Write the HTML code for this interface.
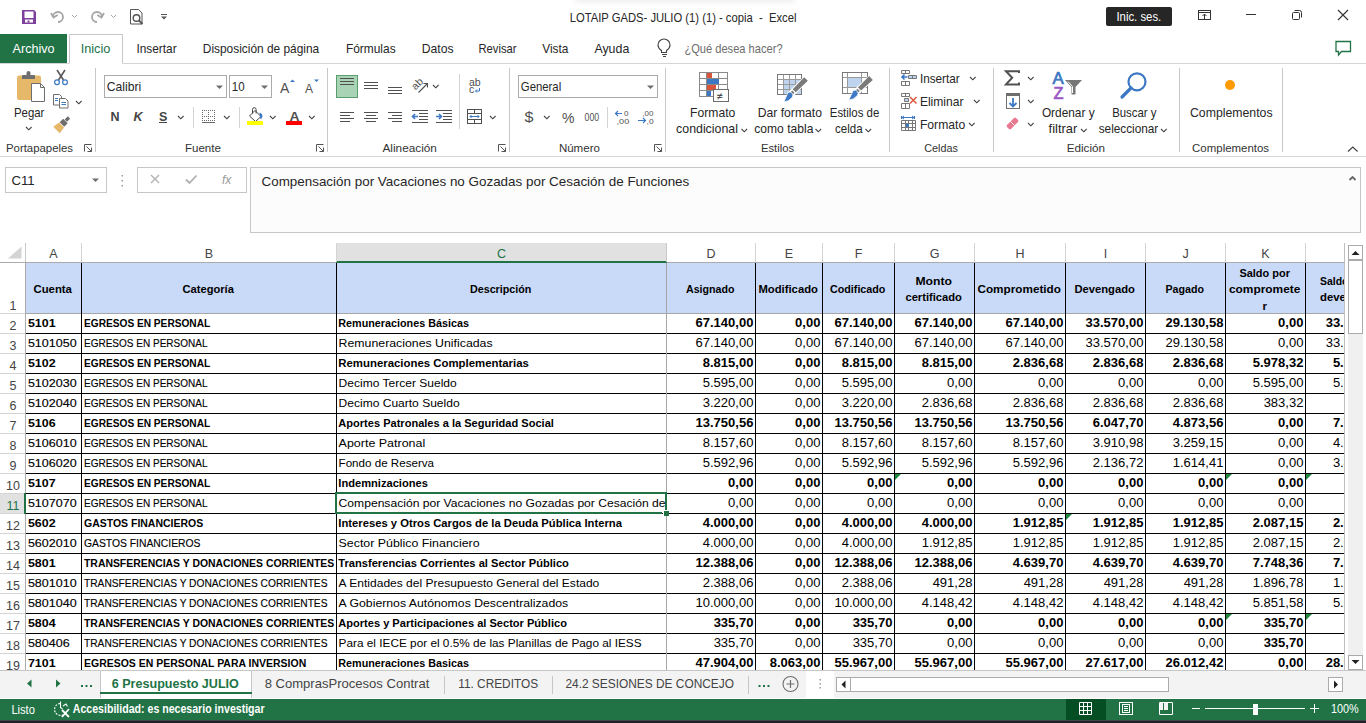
<!DOCTYPE html>
<html><head><meta charset="utf-8"><title>Excel</title>
<style>html,body{margin:0;padding:0;background:#fff;overflow:hidden;width:1366px;height:723px}svg{display:block}text{font-family:"Liberation Sans",sans-serif}</style>
</head><body><svg width="1366" height="723" viewBox="0 0 1366 723" font-family='"Liberation Sans", sans-serif'><rect x="0" y="0" width="1366" height="723" fill="#ffffff" /><filter id="blur4" x="-20%" y="-200%" width="140%" height="500%"><feGaussianBlur stdDeviation="3"/></filter><rect x="575" y="-6" width="220" height="8" fill="#000" opacity="0.07" filter="url(#blur4)"/><path d="M22 10 h12 l2 2 v12 h-14 z" fill="#7E3F9D"/><rect x="24.5" y="11.5" width="9" height="6.5" fill="#ffffff" /><rect x="25" y="19.5" width="8" height="3" fill="#ffffff" /><rect x="27.5" y="20.5" width="2" height="2" fill="#7E3F9D" /><path d="M53 17 a5 5 0 1 1 5 5" fill="none" stroke="#A6A6A6" stroke-width="1.8"/><path d="M51 13 l2.5 4.5 l4.2 -2.6" fill="none" stroke="#A6A6A6" stroke-width="1.8"/><path d="M72 15 l2.5 2.5 l2.5 -2.5" fill="none" stroke="#A6A6A6" stroke-width="1"/><path d="M102 17 a5 5 0 1 0 -5 5" fill="none" stroke="#A6A6A6" stroke-width="1.8"/><path d="M104 13 l-2.5 4.5 l-4.2 -2.6" fill="none" stroke="#A6A6A6" stroke-width="1.8"/><path d="M111 15 l2.5 2.5 l2.5 -2.5" fill="none" stroke="#A6A6A6" stroke-width="1"/><path d="M130.5 9.5 h8 l3.5 3.5 v11 h-11.5 z" fill="none" stroke="#555" stroke-width="1"/><circle cx="136.5" cy="18" r="3.3" fill="none" stroke="#555" stroke-width="1.4"/><path d="M139 20.5 l3.5 3.5" stroke="#555" stroke-width="1.8"/><rect x="161" y="14" width="6" height="1" fill="#555"/><path d="M161 16.5 h6 l-3 3 z" fill="#555"/><text x="569.7" y="22" font-size="12.4" fill="#262626" textLength="226.7" lengthAdjust="spacingAndGlyphs">LOTAIP GADS- JULIO (1) (1) - copia &#160;- &#160;Excel</text><rect x="1106" y="7" width="66" height="19" rx="2" fill="#262626"/><text x="1116.4" y="21" font-size="12.4" fill="#ffffff" textLength="44.9" lengthAdjust="spacingAndGlyphs">Inic. ses.</text><rect x="1198.5" y="10.5" width="12" height="9" fill="none" stroke="#333" stroke-width="1"/><path d="M1198.5 12.5 h12" stroke="#333" stroke-width="1"/><path d="M1204.5 19 v-5 M1202.5 16 l2 -2 l2 2" fill="none" stroke="#333" stroke-width="1"/><rect x="1246" y="14" width="10" height="1" fill="#333" /><rect x="1292.5" y="12.5" width="7" height="7" rx="1" fill="none" stroke="#333" stroke-width="1"/><path d="M1294.5 10.5 h5 a2 2 0 0 1 2 2 v5" fill="none" stroke="#333" stroke-width="1"/><path d="M1338 10 l10 10 M1348 10 l-10 10" stroke="#333" stroke-width="1.1"/><rect x="0" y="34" width="67" height="29" fill="#217346" /><text x="12.6" y="53" font-size="12.4" fill="#ffffff" textLength="41.9" lengthAdjust="spacingAndGlyphs">Archivo</text><path d="M69.5 63.5 V34.5 H122.5 V63.5" fill="#ffffff" stroke="#C6C6C6" stroke-width="1"/><text x="80.7" y="53" font-size="12.4" fill="#217346" textLength="29.7" lengthAdjust="spacingAndGlyphs">Inicio</text><rect x="0" y="63" width="69" height="1" fill="#D4D4D4" /><rect x="123" y="63" width="1243" height="1" fill="#D4D4D4" /><text x="136.4" y="53" font-size="12.4" fill="#262626" textLength="40.2" lengthAdjust="spacingAndGlyphs">Insertar</text><text x="202.8" y="53" font-size="12.4" fill="#262626" textLength="116.4" lengthAdjust="spacingAndGlyphs">Disposición de página</text><text x="345.9" y="53" font-size="12.4" fill="#262626" textLength="49.7" lengthAdjust="spacingAndGlyphs">Fórmulas</text><text x="421.8" y="53" font-size="12.4" fill="#262626" textLength="31.8" lengthAdjust="spacingAndGlyphs">Datos</text><text x="478.4" y="53" font-size="12.4" fill="#262626" textLength="38.1" lengthAdjust="spacingAndGlyphs">Revisar</text><text x="542.2" y="53" font-size="12.4" fill="#262626" textLength="26.2" lengthAdjust="spacingAndGlyphs">Vista</text><text x="594.4" y="53" font-size="12.4" fill="#262626" textLength="34.9" lengthAdjust="spacingAndGlyphs">Ayuda</text><path d="M661.5 50.5 c-3 -2 -3.5 -4 -3.5 -5.5 a6 6 0 0 1 12 0 c0 1.5 -0.5 3.5 -3.5 5.5 v2 h-5 z" fill="none" stroke="#444" stroke-width="1.1"/><rect x="662" y="54" width="5" height="1" fill="#444" /><rect x="663" y="56" width="3" height="1" fill="#444" /><text x="684.4" y="53" font-size="12.4" fill="#6D6D6D" textLength="98.2" lengthAdjust="spacingAndGlyphs">¿Qué desea hacer?</text><path d="M1336 41.5 h14.5 v10 h-9 l-3 3.5 v-3.5 h-2.5 z" fill="none" stroke="#217346" stroke-width="1.3"/><rect x="0" y="156" width="1366" height="1" fill="#D6D6D6" /><rect x="95" y="68" width="1" height="84" fill="#C8C8C8" /><rect x="327" y="68" width="1" height="84" fill="#C8C8C8" /><rect x="509" y="68" width="1" height="84" fill="#C8C8C8" /><rect x="665" y="68" width="1" height="84" fill="#C8C8C8" /><rect x="889" y="68" width="1" height="84" fill="#C8C8C8" /><rect x="993" y="68" width="1" height="84" fill="#C8C8C8" /><rect x="1179" y="68" width="1" height="84" fill="#C8C8C8" /><rect x="1282" y="68" width="1" height="84" fill="#C8C8C8" /><text x="6.0" y="152" font-size="11.6" fill="#333333" textLength="67.0" lengthAdjust="spacingAndGlyphs">Portapapeles</text><text x="184.9" y="152" font-size="11.6" fill="#333333" textLength="36.0" lengthAdjust="spacingAndGlyphs">Fuente</text><text x="382.5" y="152" font-size="11.6" fill="#333333" textLength="54.4" lengthAdjust="spacingAndGlyphs">Alineación</text><text x="558.9" y="152" font-size="11.6" fill="#333333" textLength="41.0" lengthAdjust="spacingAndGlyphs">Número</text><text x="760.9" y="152" font-size="11.6" fill="#333333" textLength="33.2" lengthAdjust="spacingAndGlyphs">Estilos</text><text x="924.3" y="152" font-size="11.6" fill="#333333" textLength="33.6" lengthAdjust="spacingAndGlyphs">Celdas</text><text x="1066.7" y="152" font-size="11.6" fill="#333333" textLength="38.3" lengthAdjust="spacingAndGlyphs">Edición</text><text x="1192.1" y="152" font-size="11.6" fill="#333333" textLength="77.0" lengthAdjust="spacingAndGlyphs">Complementos</text><path d="M84.5 151.5 v-7 h7" fill="none" stroke="#555" stroke-width="1"/><path d="M86.5 146.5 l5 5 M91.5 147.5 v4 h-4" fill="none" stroke="#555" stroke-width="1"/><path d="M316.5 151.5 v-7 h7" fill="none" stroke="#555" stroke-width="1"/><path d="M318.5 146.5 l5 5 M323.5 147.5 v4 h-4" fill="none" stroke="#555" stroke-width="1"/><path d="M498.5 151.5 v-7 h7" fill="none" stroke="#555" stroke-width="1"/><path d="M500.5 146.5 l5 5 M505.5 147.5 v4 h-4" fill="none" stroke="#555" stroke-width="1"/><path d="M654.5 151.5 v-7 h7" fill="none" stroke="#555" stroke-width="1"/><path d="M656.5 146.5 l5 5 M661.5 147.5 v4 h-4" fill="none" stroke="#555" stroke-width="1"/><rect x="17" y="75.5" width="24" height="24.5" rx="2" fill="#E6B96A"/><path d="M22 79 v-3 a1 1 0 0 1 1 -1 h3.5 v-2 a2 2 0 0 1 4 0 v2 h3.5 a1 1 0 0 1 1 1 v3 z" fill="#6E6E6E"/><path d="M31.5 83.5 h9 l4 4 v14 h-13 z" fill="#ffffff" stroke="#6E6E6E" stroke-width="1"/><path d="M40.5 83.5 v4 h4" fill="none" stroke="#6E6E6E" stroke-width="1"/><text x="14.0" y="117" font-size="12.4" fill="#262626" textLength="30.4" lengthAdjust="spacingAndGlyphs">Pegar</text><path d="M26 127 l2.8 2.8 l2.8 -2.8" fill="none" stroke="#444" stroke-width="1.1"/><path d="M57 70 L63.5 80 M65 70 L58.5 80" stroke="#5A5A5A" stroke-width="1.6"/><circle cx="57" cy="82.2" r="2.4" fill="none" stroke="#3C78C3" stroke-width="1.2"/><circle cx="65" cy="82.2" r="2.4" fill="none" stroke="#3C78C3" stroke-width="1.2"/><path d="M53.5 94.5 h6 l2 2 v8.5 h-8 z" fill="#fff" stroke="#6E6E6E" stroke-width="1"/><path d="M59.5 98.5 h6 l2.5 2.5 v7 h-8.5 z" fill="#fff" stroke="#6E6E6E" stroke-width="1"/><path d="M55 98.5 h3 M55 100.5 h3 M61.5 102.5 h4.5 M61.5 104.5 h4.5" stroke="#3C78C3" stroke-width="1"/><path d="M76 101 l2.8 2.8 l2.8 -2.8" fill="none" stroke="#444" stroke-width="1.1"/><path d="M70.13 118.63 L66.95 121.81 L64.69 119.55 L67.87 116.37 z" fill="#6E6E6E"/><path d="M67.73 123.30 L64.19 126.83 L59.67 122.31 L63.20 118.77 z" fill="#6E6E6E"/><path d="M64.05 127.54 L59.75 133.25 L53.25 126.75 L58.96 122.45 z" fill="#E6B96A"/><rect x="104.5" y="75.5" width="122" height="22" fill="#fff" stroke="#ABABAB" stroke-width="1"/><text x="106.7" y="91" font-size="12.4" fill="#262626" textLength="34.6" lengthAdjust="spacingAndGlyphs">Calibri</text><path d="M216 85.5 h7 l-3.5 3.5 z" fill="#6E6E6E"/><rect x="229.5" y="75.5" width="42" height="22" fill="#fff" stroke="#ABABAB" stroke-width="1"/><text x="231.8" y="91" font-size="12.4" fill="#262626" textLength="12.8" lengthAdjust="spacingAndGlyphs">10</text><path d="M261 85.5 h7 l-3.5 3.5 z" fill="#6E6E6E"/><text x="280" y="93" font-size="14" fill="#505050">A</text><path d="M290 82 l2.5 -2.5 l2.5 2.5 z" fill="#3C78C3"/><text x="305" y="93" font-size="12" fill="#505050">A</text><path d="M314 79.5 h5 l-2.5 2.5 z" fill="#3C78C3"/><text x="110.5" y="121" font-size="12.5" font-weight="700" fill="#444">N</text><text x="133.5" y="121" font-size="12.5" font-weight="700" fill="#444" font-style="italic">K</text><text x="159" y="121" font-size="12.5" font-weight="700" fill="#444">S</text><rect x="159" y="122" width="8" height="1" fill="#444" /><path d="M178 116 l2.8 2.8 l2.8 -2.8" fill="none" stroke="#444" stroke-width="1.1"/><rect x="193" y="107" width="1" height="21" fill="#D4D4D4" /><rect x="202" y="110" width="1" height="1" fill="#6A6A6A" /><rect x="204" y="110" width="1" height="1" fill="#6A6A6A" /><rect x="206" y="110" width="1" height="1" fill="#6A6A6A" /><rect x="208" y="110" width="1" height="1" fill="#6A6A6A" /><rect x="210" y="110" width="1" height="1" fill="#6A6A6A" /><rect x="212" y="110" width="1" height="1" fill="#6A6A6A" /><rect x="214" y="110" width="1" height="1" fill="#6A6A6A" /><rect x="202" y="112" width="1" height="1" fill="#6A6A6A" /><rect x="208" y="112" width="1" height="1" fill="#6A6A6A" /><rect x="214" y="112" width="1" height="1" fill="#6A6A6A" /><rect x="202" y="114" width="1" height="1" fill="#6A6A6A" /><rect x="208" y="114" width="1" height="1" fill="#6A6A6A" /><rect x="214" y="114" width="1" height="1" fill="#6A6A6A" /><rect x="202" y="116" width="1" height="1" fill="#6A6A6A" /><rect x="204" y="116" width="1" height="1" fill="#6A6A6A" /><rect x="206" y="116" width="1" height="1" fill="#6A6A6A" /><rect x="208" y="116" width="1" height="1" fill="#6A6A6A" /><rect x="210" y="116" width="1" height="1" fill="#6A6A6A" /><rect x="212" y="116" width="1" height="1" fill="#6A6A6A" /><rect x="214" y="116" width="1" height="1" fill="#6A6A6A" /><rect x="202" y="118" width="1" height="1" fill="#6A6A6A" /><rect x="208" y="118" width="1" height="1" fill="#6A6A6A" /><rect x="214" y="118" width="1" height="1" fill="#6A6A6A" /><rect x="202" y="120" width="1" height="1" fill="#6A6A6A" /><rect x="204" y="120" width="1" height="1" fill="#6A6A6A" /><rect x="206" y="120" width="1" height="1" fill="#6A6A6A" /><rect x="208" y="120" width="1" height="1" fill="#6A6A6A" /><rect x="210" y="120" width="1" height="1" fill="#6A6A6A" /><rect x="212" y="120" width="1" height="1" fill="#6A6A6A" /><rect x="214" y="120" width="1" height="1" fill="#6A6A6A" /><rect x="202" y="122" width="13" height="1" fill="#6A6A6A" /><path d="M224 116 l2.8 2.8 l2.8 -2.8" fill="none" stroke="#444" stroke-width="1.1"/><rect x="239" y="107" width="1" height="21" fill="#D4D4D4" /><path d="M249.5 116 l5.5 -5.5 l6 6 l-5.5 5 z" fill="#fff" stroke="#444" stroke-width="1"/><path d="M252.5 113.5 v-4 a1.8 1.8 0 0 1 3.6 0 v4" fill="none" stroke="#444" stroke-width="1"/><path d="M259.5 112.5 q3.5 1 2.8 4.5 l-1.3 2.5 l-1 -2 z" fill="#3C78C3"/><rect x="247" y="121" width="16" height="4" fill="#FFFF00" /><path d="M270 116 l2.8 2.8 l2.8 -2.8" fill="none" stroke="#444" stroke-width="1.1"/><text x="289.6" y="121" font-size="13.5" font-weight="700" fill="#505050" textLength="10" lengthAdjust="spacingAndGlyphs">A</text><rect x="286" y="121" width="16" height="4" fill="#FF0000" /><path d="M309 116 l2.8 2.8 l2.8 -2.8" fill="none" stroke="#444" stroke-width="1.1"/><rect x="336.5" y="75.5" width="21" height="22" fill="#A9D3B5" stroke="#5A9E70" stroke-width="1"/><rect x="340" y="78" width="14" height="1" fill="#505050" /><rect x="340" y="81" width="14" height="1" fill="#505050" /><rect x="340" y="84" width="14" height="1" fill="#505050" /><rect x="364" y="82" width="14" height="1" fill="#505050" /><rect x="364" y="85" width="14" height="1" fill="#505050" /><rect x="364" y="88" width="14" height="1" fill="#505050" /><rect x="388" y="87" width="14" height="1" fill="#505050" /><rect x="388" y="90" width="14" height="1" fill="#505050" /><rect x="388" y="93" width="14" height="1" fill="#505050" /><text x="0" y="0" font-size="10.5" fill="#505050" transform="translate(415.5 90.5) rotate(-45)">ab</text><path d="M418.5 92.5 L427.5 83.5 M423.5 83.5 h4 v4" fill="none" stroke="#505050" stroke-width="1.1"/><path d="M433 85 l2.8 2.8 l2.8 -2.8" fill="none" stroke="#444" stroke-width="1.1"/><rect x="459" y="74" width="1" height="55" fill="#D4D4D4" /><text x="469" y="86" font-size="10.5" fill="#505050">ab</text><text x="469" y="92.6" font-size="10.5" fill="#505050">c</text><path d="M479.5 88 v3 h-4 M477 89.5 l-1.5 1.5 l1.5 1.5" fill="none" stroke="#3C78C3" stroke-width="1"/><rect x="340" y="112" width="14" height="1" fill="#505050" /><rect x="340" y="115" width="10" height="1" fill="#505050" /><rect x="340" y="118" width="14" height="1" fill="#505050" /><rect x="340" y="121" width="10" height="1" fill="#505050" /><rect x="364" y="112" width="14" height="1" fill="#505050" /><rect x="366" y="115" width="10" height="1" fill="#505050" /><rect x="364" y="118" width="14" height="1" fill="#505050" /><rect x="366" y="121" width="10" height="1" fill="#505050" /><rect x="388" y="112" width="14" height="1" fill="#505050" /><rect x="392" y="115" width="10" height="1" fill="#505050" /><rect x="388" y="118" width="14" height="1" fill="#505050" /><rect x="392" y="121" width="10" height="1" fill="#505050" /><rect x="412" y="110" width="16" height="1" fill="#505050" /><rect x="419" y="113" width="9" height="1" fill="#505050" /><rect x="419" y="116" width="9" height="1" fill="#505050" /><rect x="419" y="119" width="9" height="1" fill="#505050" /><rect x="412" y="122" width="16" height="1" fill="#505050" /><path d="M418 116.5 h-5 M415 114 l-2.5 2.5 l2.5 2.5" fill="none" stroke="#3C78C3" stroke-width="1.6"/><rect x="436" y="110" width="16" height="1" fill="#505050" /><rect x="443" y="113" width="9" height="1" fill="#505050" /><rect x="443" y="116" width="9" height="1" fill="#505050" /><rect x="443" y="119" width="9" height="1" fill="#505050" /><rect x="436" y="122" width="16" height="1" fill="#505050" /><path d="M436 116.5 h5 M439 114 l2.5 2.5 l-2.5 2.5" fill="none" stroke="#3C78C3" stroke-width="1.6"/><rect x="467.5" y="109.5" width="14" height="14" fill="none" stroke="#505050" stroke-width="1"/><path d="M467.5 113.5 h14 M467.5 119.5 h14 M474.5 109.5 v4 M474.5 119.5 v4" stroke="#505050" stroke-width="1"/><path d="M470 116.5 h9 M471.5 115 l-1.5 1.5 l1.5 1.5 M477.5 115 l1.5 1.5 l-1.5 1.5" fill="none" stroke="#3C78C3" stroke-width="1"/><path d="M490 116 l2.8 2.8 l2.8 -2.8" fill="none" stroke="#444" stroke-width="1.1"/><rect x="518.5" y="75.5" width="139" height="22" fill="#fff" stroke="#ABABAB" stroke-width="1"/><text x="520.8" y="91" font-size="12.4" fill="#262626" textLength="40.4" lengthAdjust="spacingAndGlyphs">General</text><path d="M647 85.5 h7 l-3.5 3.5 z" fill="#6E6E6E"/><text x="524.6" y="122.4" font-size="15.5" fill="#505050" textLength="9" lengthAdjust="spacingAndGlyphs">$</text><path d="M544 116 l2.8 2.8 l2.8 -2.8" fill="none" stroke="#444" stroke-width="1.1"/><text x="562" y="123" font-size="14" fill="#505050">%</text><text x="584.6" y="120.8" font-size="10.5" fill="#505050" textLength="14.6" lengthAdjust="spacingAndGlyphs">000</text><rect x="607" y="107" width="1" height="21" fill="#D4D4D4" /><text x="624" y="115.6" font-size="8" fill="#505050">0</text><text x="616.6" y="123.6" font-size="8" fill="#505050" textLength="12.6" lengthAdjust="spacingAndGlyphs">,00</text><path d="M622 113.5 h-6.5 M618 111 l-2.5 2.5 l2.5 2.5" fill="none" stroke="#3C78C3" stroke-width="1.2"/><text x="642.4" y="115.6" font-size="8" fill="#505050" textLength="11" lengthAdjust="spacingAndGlyphs">,00</text><text x="646.6" y="123.6" font-size="8" fill="#505050" textLength="7" lengthAdjust="spacingAndGlyphs">,0</text><path d="M638 120.5 h7.5 M643 118 l2.5 2.5 l-2.5 2.5" fill="none" stroke="#3C78C3" stroke-width="1.2"/><rect x="699.5" y="72.5" width="28" height="24" fill="#fff" stroke="#8A8A8A" stroke-width="1"/><path d="M706.5 72.5 v24 M718.5 72.5 v24 M699.5 78.5 h28 M699.5 84.5 h28 M699.5 90.5 h28" stroke="#8A8A8A" stroke-width="1"/><rect x="707" y="73" width="5" height="5" fill="#D9553B" /><rect x="707" y="79" width="12" height="5" fill="#3C78C3" /><rect x="707" y="85" width="9" height="5" fill="#D9553B" /><rect x="707" y="91" width="4" height="5" fill="#3C78C3" /><rect x="713.5" y="89.5" width="15" height="12" fill="#fff" stroke="#6E6E6E" stroke-width="1"/><text x="716.5" y="99.5" font-size="11" fill="#333">≠</text><text x="690.1" y="117" font-size="12.4" fill="#262626" textLength="45.2" lengthAdjust="spacingAndGlyphs">Formato</text><text x="676.1" y="133" font-size="12.4" fill="#262626" textLength="61.8" lengthAdjust="spacingAndGlyphs">condicional</text><path d="M741.5 129 l2.8 2.8 l2.8 -2.8" fill="none" stroke="#444" stroke-width="1.1"/><rect x="777.5" y="74.5" width="24" height="20" fill="#fff" stroke="#7A7A7A" stroke-width="1"/><rect x="784" y="80" width="17" height="14" fill="#BDD3EE" /><path d="M783.5 74.5 v20 M789.5 74.5 v20 M795.5 74.5 v20 M777.5 79.5 h24 M777.5 84.5 h24 M777.5 89.5 h24" stroke="#9A9A9A" stroke-width="1"/><path d="M777.5 74.5 h24 v20 h-24 z" fill="none" stroke="#7A7A7A" stroke-width="1"/><path d="M789.86 95.14 L806.00 79.00" stroke="#fff" stroke-width="6.5" stroke-linecap="butt"/><path d="M789.79 92.94 L792.27 90.47 L794.53 92.73 L792.06 95.21 z" fill="#7A7A7A"/><path d="M792.69 89.20 L804.16 77.16 L807.84 80.84 L795.80 92.31 z" fill="#7A7A7A"/><path d="M783.85 101.85 L787.95 92.52 A3.3 3.3 0 0 1 792.48 97.05 Q788.45 102.21 783.85 101.85 z" fill="#3C78C3" stroke="#fff" stroke-width="0.8"/><text x="757.8" y="117" font-size="12.4" fill="#262626" textLength="64.1" lengthAdjust="spacingAndGlyphs">Dar formato</text><text x="754.3" y="133" font-size="12.4" fill="#262626" textLength="59.1" lengthAdjust="spacingAndGlyphs">como tabla</text><path d="M815.5 129 l2.8 2.8 l2.8 -2.8" fill="none" stroke="#444" stroke-width="1.1"/><rect x="842.5" y="72.5" width="25" height="21" fill="#fff" stroke="#7A7A7A" stroke-width="1"/><rect x="848" y="78" width="13" height="9" fill="#BDD3EE" /><path d="M847.5 72.5 v21 M861.5 72.5 v21 M842.5 77.5 h25 M842.5 87.5 h25" stroke="#9A9A9A" stroke-width="1"/><path d="M842.5 72.5 h25 v21 h-25 z" fill="none" stroke="#7A7A7A" stroke-width="1"/><path d="M855.01 93.28 L871.00 78.00" stroke="#fff" stroke-width="6.5" stroke-linecap="butt"/><path d="M854.99 91.09 L857.52 88.67 L859.73 90.98 L857.20 93.40 z" fill="#7A7A7A"/><path d="M857.97 87.41 L869.20 76.12 L872.80 79.88 L861.01 90.59 z" fill="#7A7A7A"/><path d="M848.85 99.86 L853.16 90.62 A3.3 3.3 0 0 1 857.58 95.25 Q853.43 100.32 848.85 99.86 z" fill="#3C78C3" stroke="#fff" stroke-width="0.8"/><text x="829.8" y="117" font-size="12.4" fill="#262626" textLength="49.5" lengthAdjust="spacingAndGlyphs">Estilos de</text><text x="835.1" y="133" font-size="12.4" fill="#262626" textLength="27.5" lengthAdjust="spacingAndGlyphs">celda</text><path d="M865.5 129 l2.8 2.8 l2.8 -2.8" fill="none" stroke="#444" stroke-width="1.1"/><path d="M901.5 70.5 v3 M905.5 70.5 v3 M909.5 70.5 v3 M901.5 70.5 h8 M901.5 73.5 h8 " fill="none" stroke="#767676" stroke-width="1"/><path d="M901.5 81.5 v4 M905.5 81.5 v4 M909.5 81.5 v4 M901.5 81.5 h8 M901.5 85.5 h8 " fill="none" stroke="#767676" stroke-width="1"/><path d="M905.5 73.5 v0 M901.5 81.5 v4" stroke="#767676" stroke-width="1"/><rect x="909" y="76" width="7" height="2" fill="#BDD3EE" /><path d="M908.5 75.5 v3 M912.5 75.5 v3 M916.5 75.5 v3 M908.5 75.5 h8 M908.5 78.5 h8 " fill="none" stroke="#767676" stroke-width="1"/><path d="M907.5 77 h-5 M904.5 74.5 l-2.5 2.5 l2.5 2.5" fill="none" stroke="#3C78C3" stroke-width="1.6"/><text x="919.9" y="83" font-size="12.4" fill="#262626" textLength="39.7" lengthAdjust="spacingAndGlyphs">Insertar</text><path d="M970 77 l2.8 2.8 l2.8 -2.8" fill="none" stroke="#444" stroke-width="1.1"/><path d="M901.5 93.5 v3 M905.5 93.5 v3 M909.5 93.5 v3 M901.5 93.5 h8 M901.5 96.5 h8 " fill="none" stroke="#767676" stroke-width="1"/><path d="M901.5 103.5 v5 M905.5 103.5 v5 M909.5 103.5 v5 M901.5 103.5 h8 M901.5 108.5 h8 " fill="none" stroke="#767676" stroke-width="1"/><rect x="905" y="99" width="3" height="2" fill="#BDD3EE" /><path d="M904.5 98.5 v3 M908.5 98.5 v3 M904.5 98.5 h4 M904.5 101.5 h4 " fill="none" stroke="#767676" stroke-width="1"/><path d="M910 97 l6.5 6.5 M916.5 97 l-6.5 6.5" stroke="#E0583D" stroke-width="1.5"/><text x="919.9" y="106" font-size="12.4" fill="#262626" textLength="43.6" lengthAdjust="spacingAndGlyphs">Eliminar</text><path d="M974 100 l2.8 2.8 l2.8 -2.8" fill="none" stroke="#444" stroke-width="1.1"/><path d="M901.5 120.5 h14 v10 h-14 z M905.5 120.5 v10 M908.5 120.5 v10 M912.5 120.5 v10 M901.5 123.5 h14 M901.5 127.5 h14" fill="none" stroke="#767676" stroke-width="1"/><rect x="906" y="124" width="3" height="3" fill="#3C78C3" /><path d="M902 117.5 h12 M901.5 116 v3 M914.5 116 v3 M904 116 l-2 1.5 l2 1.5 M912 116 l2 1.5 l-2 1.5" fill="none" stroke="#3C78C3" stroke-width="1"/><text x="919.9" y="129" font-size="12.4" fill="#262626" textLength="45.3" lengthAdjust="spacingAndGlyphs">Formato</text><path d="M969 123 l2.8 2.8 l2.8 -2.8" fill="none" stroke="#444" stroke-width="1.1"/><path d="M1019 73 v-1.8 h-13 l6.2 6.6 l-6.2 6.6 h13 v-1.8" fill="none" stroke="#505050" stroke-width="2" stroke-linejoin="miter"/><path d="M1028 77 l2.8 2.8 l2.8 -2.8" fill="none" stroke="#444" stroke-width="1.1"/><rect x="1006.5" y="93.5" width="13" height="15" fill="#fff" stroke="#6E6E6E" stroke-width="1"/><rect x="1006" y="93" width="14" height="3" fill="#6E6E6E" /><path d="M1013 98 v8 M1009.5 103 l3.5 3.5 l3.5 -3.5" fill="none" stroke="#3C78C3" stroke-width="1.8"/><path d="M1028 100 l2.8 2.8 l2.8 -2.8" fill="none" stroke="#444" stroke-width="1.1"/><path d="M1007 125 l7 -7 a1.5 1.5 0 0 1 2 0 l2 2 a1.5 1.5 0 0 1 0 2 l-7 7 a1.5 1.5 0 0 1 -2 0 l-2 -2 a1.5 1.5 0 0 1 0 -2 z" fill="#E8798F"/><path d="M1010.5 121.5 l4 4" stroke="#fff" stroke-width="1"/><path d="M1028 123 l2.8 2.8 l2.8 -2.8" fill="none" stroke="#444" stroke-width="1.1"/><text x="1052.6" y="84.4" font-size="16" fill="#3C78C3" textLength="11.2" lengthAdjust="spacingAndGlyphs" stroke="#3C78C3" stroke-width="0.7">A</text><text x="1053.6" y="99" font-size="17" fill="#9B59C8" textLength="10" lengthAdjust="spacingAndGlyphs" stroke="#9B59C8" stroke-width="0.7">Z</text><path d="M1065 80 h17 l-6.5 7 v7.5 h-4 v-7.5 z" fill="#777"/><path d="M1068 81.5 l4.5 5 v6.5" fill="none" stroke="#fff" stroke-width="1"/><text x="1041.9" y="117" font-size="12.4" fill="#262626" textLength="52.7" lengthAdjust="spacingAndGlyphs">Ordenar y</text><text x="1048.6" y="133" font-size="12.4" fill="#262626" textLength="28.6" lengthAdjust="spacingAndGlyphs">filtrar</text><path d="M1081 129 l2.8 2.8 l2.8 -2.8" fill="none" stroke="#444" stroke-width="1.1"/><circle cx="1137" cy="81.8" r="8.5" fill="none" stroke="#3C78C3" stroke-width="2.2"/><path d="M1131 88 l-9 9" stroke="#3C78C3" stroke-width="3.2" stroke-linecap="round"/><text x="1112.2" y="117" font-size="12.4" fill="#262626" textLength="44.3" lengthAdjust="spacingAndGlyphs">Buscar y</text><text x="1098.7" y="133" font-size="12.4" fill="#262626" textLength="59.6" lengthAdjust="spacingAndGlyphs">seleccionar</text><path d="M1161 129 l2.8 2.8 l2.8 -2.8" fill="none" stroke="#444" stroke-width="1.1"/><circle cx="1230" cy="85" r="5" fill="#FF9A00"/><text x="1190.0" y="117" font-size="12.4" fill="#262626" textLength="82.6" lengthAdjust="spacingAndGlyphs">Complementos</text><path d="M1348 151.5 l4.8 -4.5 l4.8 4.5" fill="none" stroke="#444" stroke-width="1.2"/><rect x="5.5" y="167.5" width="101" height="25" fill="#fff" stroke="#C6C6C6" stroke-width="1"/><text x="11.4" y="185" font-size="12.6" fill="#262626" textLength="23.2" lengthAdjust="spacingAndGlyphs">C11</text><path d="M92 178.5 h7 l-3.5 3.5 z" fill="#6E6E6E"/><rect x="121.5" y="175" width="1.5" height="1.5" fill="#9A9A9A" /><rect x="121.5" y="180" width="1.5" height="1.5" fill="#9A9A9A" /><rect x="121.5" y="185" width="1.5" height="1.5" fill="#9A9A9A" /><rect x="137.5" y="167.5" width="109" height="25" fill="#fff" stroke="#C6C6C6" stroke-width="1"/><path d="M151 175 l8 8 M159 175 l-8 8" stroke="#B0B0B0" stroke-width="1.3"/><path d="M186 179.5 l3.5 3.5 l7 -7.5" fill="none" stroke="#B0B0B0" stroke-width="1.8"/><text x="222" y="184" font-size="12" fill="#9A9A9A" font-style="italic" font-family="Liberation Serif">fx</text><rect x="250.5" y="167.5" width="1110" height="65" fill="#FCFCFC" stroke="#C6C6C6" stroke-width="1"/><text x="261.5" y="186" font-size="13.2" fill="#262626" textLength="427.8" lengthAdjust="spacingAndGlyphs">Compensación por Vacaciones no Gozadas por Cesación de Funciones</text><path d="M1349.5 180 l3 -3 l3 3" fill="none" stroke="#666" stroke-width="1.8"/><rect x="0" y="243" width="1345" height="19" fill="#ffffff" /><rect x="337" y="243" width="329" height="18" fill="#E1E1E1" /><rect x="336" y="261" width="331" height="2" fill="#217346" /><path d="M8 258.5 L21.5 258.5 L21.5 246.5 Z" fill="#D4D4D4"/><rect x="25" y="243" width="1" height="19" fill="#D4D4D4" /><rect x="81" y="243" width="1" height="19" fill="#D4D4D4" /><rect x="336" y="243" width="1" height="19" fill="#D4D4D4" /><rect x="666" y="243" width="1" height="19" fill="#D4D4D4" /><rect x="755" y="243" width="1" height="19" fill="#D4D4D4" /><rect x="822" y="243" width="1" height="19" fill="#D4D4D4" /><rect x="894" y="243" width="1" height="19" fill="#D4D4D4" /><rect x="974" y="243" width="1" height="19" fill="#D4D4D4" /><rect x="1065" y="243" width="1" height="19" fill="#D4D4D4" /><rect x="1145" y="243" width="1" height="19" fill="#D4D4D4" /><rect x="1225" y="243" width="1" height="19" fill="#D4D4D4" /><rect x="1305" y="243" width="1" height="19" fill="#D4D4D4" /><rect x="25" y="243" width="1" height="19" fill="#C8C8C8" /><rect x="666" y="243" width="1" height="19" fill="#C8C8C8" /><rect x="0" y="262" width="336" height="1" fill="#ABABAB" /><rect x="667" y="262" width="678" height="1" fill="#ABABAB" /><text x="53.5" y="258" font-size="12.5" fill="#444444" text-anchor="middle">A</text><text x="209.0" y="258" font-size="12.5" fill="#444444" text-anchor="middle">B</text><text x="501.5" y="258" font-size="12.5" fill="#217346" text-anchor="middle">C</text><text x="711.0" y="258" font-size="12.5" fill="#444444" text-anchor="middle">D</text><text x="789.0" y="258" font-size="12.5" fill="#444444" text-anchor="middle">E</text><text x="858.5" y="258" font-size="12.5" fill="#444444" text-anchor="middle">F</text><text x="934.5" y="258" font-size="12.5" fill="#444444" text-anchor="middle">G</text><text x="1020.0" y="258" font-size="12.5" fill="#444444" text-anchor="middle">H</text><text x="1105.5" y="258" font-size="12.5" fill="#444444" text-anchor="middle">I</text><text x="1185.5" y="258" font-size="12.5" fill="#444444" text-anchor="middle">J</text><text x="1265.5" y="258" font-size="12.5" fill="#444444" text-anchor="middle">K</text><rect x="26" y="263" width="1318" height="50" fill="#C9DAF8" /><rect x="0" y="494" width="24" height="19" fill="#E1E1E1" /><rect x="0" y="313" width="25" height="1" fill="#D4D4D4" /><rect x="0" y="333" width="25" height="1" fill="#D4D4D4" /><rect x="0" y="353" width="25" height="1" fill="#D4D4D4" /><rect x="0" y="373" width="25" height="1" fill="#D4D4D4" /><rect x="0" y="393" width="25" height="1" fill="#D4D4D4" /><rect x="0" y="413" width="25" height="1" fill="#D4D4D4" /><rect x="0" y="433" width="25" height="1" fill="#D4D4D4" /><rect x="0" y="453" width="25" height="1" fill="#D4D4D4" /><rect x="0" y="473" width="25" height="1" fill="#D4D4D4" /><rect x="0" y="493" width="25" height="1" fill="#D4D4D4" /><rect x="0" y="513" width="25" height="1" fill="#D4D4D4" /><rect x="0" y="533" width="25" height="1" fill="#D4D4D4" /><rect x="0" y="553" width="25" height="1" fill="#D4D4D4" /><rect x="0" y="573" width="25" height="1" fill="#D4D4D4" /><rect x="0" y="593" width="25" height="1" fill="#D4D4D4" /><rect x="0" y="613" width="25" height="1" fill="#D4D4D4" /><rect x="0" y="633" width="25" height="1" fill="#D4D4D4" /><rect x="0" y="653" width="25" height="1" fill="#D4D4D4" /><rect x="0" y="673" width="25" height="1" fill="#D4D4D4" /><rect x="25" y="262" width="1" height="408" fill="#ABABAB" /><rect x="24" y="493" width="2" height="21" fill="#217346" /><text x="13" y="310" font-size="12.5" fill="#444444" text-anchor="middle">1</text><text x="13" y="330" font-size="12.5" fill="#444444" text-anchor="middle">2</text><text x="13" y="350" font-size="12.5" fill="#444444" text-anchor="middle">3</text><text x="13" y="370" font-size="12.5" fill="#444444" text-anchor="middle">4</text><text x="13" y="390" font-size="12.5" fill="#444444" text-anchor="middle">5</text><text x="13" y="410" font-size="12.5" fill="#444444" text-anchor="middle">6</text><text x="13" y="430" font-size="12.5" fill="#444444" text-anchor="middle">7</text><text x="13" y="450" font-size="12.5" fill="#444444" text-anchor="middle">8</text><text x="13" y="470" font-size="12.5" fill="#444444" text-anchor="middle">9</text><text x="13" y="490" font-size="12.5" fill="#444444" text-anchor="middle">10</text><text x="13" y="510" font-size="12.5" fill="#217346" text-anchor="middle">11</text><text x="13" y="530" font-size="12.5" fill="#444444" text-anchor="middle">12</text><text x="13" y="550" font-size="12.5" fill="#444444" text-anchor="middle">13</text><text x="13" y="570" font-size="12.5" fill="#444444" text-anchor="middle">14</text><text x="13" y="590" font-size="12.5" fill="#444444" text-anchor="middle">15</text><text x="13" y="610" font-size="12.5" fill="#444444" text-anchor="middle">16</text><text x="13" y="630" font-size="12.5" fill="#444444" text-anchor="middle">17</text><text x="13" y="650" font-size="12.5" fill="#444444" text-anchor="middle">18</text><text x="13" y="670" font-size="12.5" fill="#444444" text-anchor="middle">19</text><rect x="26" y="313" width="1318" height="1" fill="#A6A6A6" /><rect x="26" y="333" width="1318" height="1" fill="#000000" /><rect x="26" y="353" width="1318" height="1" fill="#000000" /><rect x="26" y="373" width="1318" height="1" fill="#000000" /><rect x="26" y="393" width="1318" height="1" fill="#000000" /><rect x="26" y="413" width="1318" height="1" fill="#000000" /><rect x="26" y="433" width="1318" height="1" fill="#000000" /><rect x="26" y="453" width="1318" height="1" fill="#000000" /><rect x="26" y="473" width="1318" height="1" fill="#000000" /><rect x="26" y="493" width="1318" height="1" fill="#000000" /><rect x="26" y="513" width="1318" height="1" fill="#000000" /><rect x="26" y="533" width="1318" height="1" fill="#000000" /><rect x="26" y="553" width="1318" height="1" fill="#000000" /><rect x="26" y="573" width="1318" height="1" fill="#000000" /><rect x="26" y="593" width="1318" height="1" fill="#000000" /><rect x="26" y="613" width="1318" height="1" fill="#000000" /><rect x="26" y="633" width="1318" height="1" fill="#000000" /><rect x="26" y="653" width="1318" height="1" fill="#000000" /><rect x="26" y="673" width="1318" height="1" fill="#000000" /><rect x="81" y="263" width="1" height="407" fill="#000000" /><rect x="336" y="263" width="1" height="407" fill="#000000" /><rect x="755" y="263" width="1" height="407" fill="#000000" /><rect x="822" y="263" width="1" height="407" fill="#000000" /><rect x="894" y="263" width="1" height="407" fill="#000000" /><rect x="974" y="263" width="1" height="407" fill="#000000" /><rect x="1065" y="263" width="1" height="407" fill="#000000" /><rect x="1145" y="263" width="1" height="407" fill="#000000" /><rect x="1225" y="263" width="1" height="407" fill="#000000" /><rect x="1305" y="263" width="1" height="407" fill="#000000" /><rect x="666" y="263" width="1" height="407" fill="#A6A6A6" /><rect x="1344" y="243" width="1" height="428" fill="#BFBFBF" /><text x="52.7" y="293" font-size="11.6" font-weight="700" fill="#000000" text-anchor="middle" textLength="38.5" lengthAdjust="spacingAndGlyphs">Cuenta</text><text x="208.2" y="293" font-size="11.6" font-weight="700" fill="#000000" text-anchor="middle" textLength="51.5" lengthAdjust="spacingAndGlyphs">Categoría</text><text x="500.7" y="293" font-size="11.6" font-weight="700" fill="#000000" text-anchor="middle" textLength="61.5" lengthAdjust="spacingAndGlyphs">Descripción</text><text x="710.2" y="293" font-size="11.6" font-weight="700" fill="#000000" text-anchor="middle" textLength="48.5" lengthAdjust="spacingAndGlyphs">Asignado</text><text x="788.2" y="293" font-size="11.6" font-weight="700" fill="#000000" text-anchor="middle" textLength="59.5" lengthAdjust="spacingAndGlyphs">Modificado</text><text x="857.7" y="293" font-size="11.6" font-weight="700" fill="#000000" text-anchor="middle" textLength="55.5" lengthAdjust="spacingAndGlyphs">Codificado</text><text x="933.7" y="284.5" font-size="11.6" font-weight="700" fill="#000000" text-anchor="middle" textLength="36.5" lengthAdjust="spacingAndGlyphs">Monto</text><text x="933.7" y="301" font-size="11.6" font-weight="700" fill="#000000" text-anchor="middle" textLength="56.5" lengthAdjust="spacingAndGlyphs">certificado</text><text x="1019.2" y="293" font-size="11.6" font-weight="700" fill="#000000" text-anchor="middle" textLength="83.5" lengthAdjust="spacingAndGlyphs">Comprometido</text><text x="1104.7" y="293" font-size="11.6" font-weight="700" fill="#000000" text-anchor="middle" textLength="60.5" lengthAdjust="spacingAndGlyphs">Devengado</text><text x="1184.7" y="293" font-size="11.6" font-weight="700" fill="#000000" text-anchor="middle" textLength="38.5" lengthAdjust="spacingAndGlyphs">Pagado</text><text x="1264.7" y="276.5" font-size="11.6" font-weight="700" fill="#000000" text-anchor="middle" textLength="50.5" lengthAdjust="spacingAndGlyphs">Saldo por</text><text x="1264.7" y="293" font-size="11.6" font-weight="700" fill="#000000" text-anchor="middle" textLength="71.5" lengthAdjust="spacingAndGlyphs">compromete</text><text x="1264.7" y="309.5" font-size="11.6" font-weight="700" fill="#000000" text-anchor="middle" textLength="4.5" lengthAdjust="spacingAndGlyphs">r</text><clipPath id="clipL"><rect x="1306" y="263" width="38" height="50"/></clipPath><g clip-path="url(#clipL)"><text x="1320" y="284.5" font-size="11.6" font-weight="700" fill="#000000" textLength="28.5" lengthAdjust="spacingAndGlyphs">Saldo</text><text x="1320" y="301" font-size="11.6" font-weight="700" fill="#000000" textLength="50.5" lengthAdjust="spacingAndGlyphs">devengar</text></g><clipPath id="gridclip"><rect x="26" y="313" width="1318" height="357"/></clipPath><g clip-path="url(#gridclip)"><text x="27.9" y="327" font-size="11.6" font-weight="700" fill="#000000" textLength="27.7" lengthAdjust="spacingAndGlyphs">5101</text><text x="84.0" y="327" font-size="11.6" font-weight="700" fill="#000000" textLength="126.2" lengthAdjust="spacingAndGlyphs">EGRESOS EN PERSONAL</text><text x="338.3" y="327" font-size="11.6" font-weight="700" fill="#000000" textLength="130.6" lengthAdjust="spacingAndGlyphs">Remuneraciones Básicas</text><text x="753.4" y="327" font-size="13" font-weight="700" fill="#000000" text-anchor="end">67.140,00</text><text x="820.4" y="327" font-size="13" font-weight="700" fill="#000000" text-anchor="end">0,00</text><text x="892.4" y="327" font-size="13" font-weight="700" fill="#000000" text-anchor="end">67.140,00</text><text x="972.4" y="327" font-size="13" font-weight="700" fill="#000000" text-anchor="end">67.140,00</text><text x="1063.4" y="327" font-size="13" font-weight="700" fill="#000000" text-anchor="end">67.140,00</text><text x="1143.4" y="327" font-size="13" font-weight="700" fill="#000000" text-anchor="end">33.570,00</text><text x="1223.4" y="327" font-size="13" font-weight="700" fill="#000000" text-anchor="end">29.130,58</text><text x="1303.4" y="327" font-size="13" font-weight="700" fill="#000000" text-anchor="end">0,00</text><text x="1383.5" y="327" font-size="13" font-weight="700" fill="#000000" text-anchor="end">33.570,00</text><text x="27.9" y="347" font-size="11.6" fill="#000000" textLength="48.7" lengthAdjust="spacingAndGlyphs" stroke="#000" stroke-width="0.15">5101050</text><text x="84.0" y="347" font-size="11.6" fill="#000000" textLength="123.5" lengthAdjust="spacingAndGlyphs" stroke="#000" stroke-width="0.15">EGRESOS EN PERSONAL</text><text x="338.6" y="347" font-size="11.6" fill="#000000" textLength="154.0" lengthAdjust="spacingAndGlyphs">Remuneraciones Unificadas</text><text x="753.4" y="347" font-size="13" fill="#000000" text-anchor="end">67.140,00</text><text x="820.4" y="347" font-size="13" fill="#000000" text-anchor="end">0,00</text><text x="892.4" y="347" font-size="13" fill="#000000" text-anchor="end">67.140,00</text><text x="972.4" y="347" font-size="13" fill="#000000" text-anchor="end">67.140,00</text><text x="1063.4" y="347" font-size="13" fill="#000000" text-anchor="end">67.140,00</text><text x="1143.4" y="347" font-size="13" fill="#000000" text-anchor="end">33.570,00</text><text x="1223.4" y="347" font-size="13" fill="#000000" text-anchor="end">29.130,58</text><text x="1303.4" y="347" font-size="13" fill="#000000" text-anchor="end">0,00</text><text x="1383.5" y="347" font-size="13" fill="#000000" text-anchor="end">33.570,00</text><text x="27.9" y="367" font-size="11.6" font-weight="700" fill="#000000" textLength="27.7" lengthAdjust="spacingAndGlyphs">5102</text><text x="84.0" y="367" font-size="11.6" font-weight="700" fill="#000000" textLength="126.2" lengthAdjust="spacingAndGlyphs">EGRESOS EN PERSONAL</text><text x="338.3" y="367" font-size="11.6" font-weight="700" fill="#000000" textLength="190.6" lengthAdjust="spacingAndGlyphs">Remuneraciones Complementarias</text><text x="753.4" y="367" font-size="13" font-weight="700" fill="#000000" text-anchor="end">8.815,00</text><text x="820.4" y="367" font-size="13" font-weight="700" fill="#000000" text-anchor="end">0,00</text><text x="892.4" y="367" font-size="13" font-weight="700" fill="#000000" text-anchor="end">8.815,00</text><text x="972.4" y="367" font-size="13" font-weight="700" fill="#000000" text-anchor="end">8.815,00</text><text x="1063.4" y="367" font-size="13" font-weight="700" fill="#000000" text-anchor="end">2.836,68</text><text x="1143.4" y="367" font-size="13" font-weight="700" fill="#000000" text-anchor="end">2.836,68</text><text x="1223.4" y="367" font-size="13" font-weight="700" fill="#000000" text-anchor="end">2.836,68</text><text x="1303.4" y="367" font-size="13" font-weight="700" fill="#000000" text-anchor="end">5.978,32</text><text x="1383.5" y="367" font-size="13" font-weight="700" fill="#000000" text-anchor="end">5.978,32</text><text x="27.9" y="387" font-size="11.6" fill="#000000" textLength="48.7" lengthAdjust="spacingAndGlyphs" stroke="#000" stroke-width="0.15">5102030</text><text x="84.0" y="387" font-size="11.6" fill="#000000" textLength="123.5" lengthAdjust="spacingAndGlyphs" stroke="#000" stroke-width="0.15">EGRESOS EN PERSONAL</text><text x="338.6" y="387" font-size="11.6" fill="#000000" textLength="118.1" lengthAdjust="spacingAndGlyphs">Decimo Tercer Sueldo</text><text x="753.4" y="387" font-size="13" fill="#000000" text-anchor="end">5.595,00</text><text x="820.4" y="387" font-size="13" fill="#000000" text-anchor="end">0,00</text><text x="892.4" y="387" font-size="13" fill="#000000" text-anchor="end">5.595,00</text><text x="972.4" y="387" font-size="13" fill="#000000" text-anchor="end">0,00</text><text x="1063.4" y="387" font-size="13" fill="#000000" text-anchor="end">0,00</text><text x="1143.4" y="387" font-size="13" fill="#000000" text-anchor="end">0,00</text><text x="1223.4" y="387" font-size="13" fill="#000000" text-anchor="end">0,00</text><text x="1303.4" y="387" font-size="13" fill="#000000" text-anchor="end">5.595,00</text><text x="1383.5" y="387" font-size="13" fill="#000000" text-anchor="end">5.595,00</text><text x="27.9" y="407" font-size="11.6" fill="#000000" textLength="48.7" lengthAdjust="spacingAndGlyphs" stroke="#000" stroke-width="0.15">5102040</text><text x="84.0" y="407" font-size="11.6" fill="#000000" textLength="123.5" lengthAdjust="spacingAndGlyphs" stroke="#000" stroke-width="0.15">EGRESOS EN PERSONAL</text><text x="338.6" y="407" font-size="11.6" fill="#000000" textLength="121.0" lengthAdjust="spacingAndGlyphs">Decimo Cuarto Sueldo</text><text x="753.4" y="407" font-size="13" fill="#000000" text-anchor="end">3.220,00</text><text x="820.4" y="407" font-size="13" fill="#000000" text-anchor="end">0,00</text><text x="892.4" y="407" font-size="13" fill="#000000" text-anchor="end">3.220,00</text><text x="972.4" y="407" font-size="13" fill="#000000" text-anchor="end">2.836,68</text><text x="1063.4" y="407" font-size="13" fill="#000000" text-anchor="end">2.836,68</text><text x="1143.4" y="407" font-size="13" fill="#000000" text-anchor="end">2.836,68</text><text x="1223.4" y="407" font-size="13" fill="#000000" text-anchor="end">2.836,68</text><text x="1303.4" y="407" font-size="13" fill="#000000" text-anchor="end">383,32</text><text x="27.9" y="427" font-size="11.6" font-weight="700" fill="#000000" textLength="27.7" lengthAdjust="spacingAndGlyphs">5106</text><text x="84.0" y="427" font-size="11.6" font-weight="700" fill="#000000" textLength="126.2" lengthAdjust="spacingAndGlyphs">EGRESOS EN PERSONAL</text><text x="338.3" y="427" font-size="11.6" font-weight="700" fill="#000000" textLength="215.6" lengthAdjust="spacingAndGlyphs">Aportes Patronales a la Seguridad Social</text><text x="753.4" y="427" font-size="13" font-weight="700" fill="#000000" text-anchor="end">13.750,56</text><text x="820.4" y="427" font-size="13" font-weight="700" fill="#000000" text-anchor="end">0,00</text><text x="892.4" y="427" font-size="13" font-weight="700" fill="#000000" text-anchor="end">13.750,56</text><text x="972.4" y="427" font-size="13" font-weight="700" fill="#000000" text-anchor="end">13.750,56</text><text x="1063.4" y="427" font-size="13" font-weight="700" fill="#000000" text-anchor="end">13.750,56</text><text x="1143.4" y="427" font-size="13" font-weight="700" fill="#000000" text-anchor="end">6.047,70</text><text x="1223.4" y="427" font-size="13" font-weight="700" fill="#000000" text-anchor="end">4.873,56</text><text x="1303.4" y="427" font-size="13" font-weight="700" fill="#000000" text-anchor="end">0,00</text><text x="1383.5" y="427" font-size="13" font-weight="700" fill="#000000" text-anchor="end">7.702,86</text><text x="27.9" y="447" font-size="11.6" fill="#000000" textLength="48.7" lengthAdjust="spacingAndGlyphs" stroke="#000" stroke-width="0.15">5106010</text><text x="84.0" y="447" font-size="11.6" fill="#000000" textLength="123.5" lengthAdjust="spacingAndGlyphs" stroke="#000" stroke-width="0.15">EGRESOS EN PERSONAL</text><text x="338.6" y="447" font-size="11.6" fill="#000000" textLength="86.6" lengthAdjust="spacingAndGlyphs">Aporte Patronal</text><text x="753.4" y="447" font-size="13" fill="#000000" text-anchor="end">8.157,60</text><text x="820.4" y="447" font-size="13" fill="#000000" text-anchor="end">0,00</text><text x="892.4" y="447" font-size="13" fill="#000000" text-anchor="end">8.157,60</text><text x="972.4" y="447" font-size="13" fill="#000000" text-anchor="end">8.157,60</text><text x="1063.4" y="447" font-size="13" fill="#000000" text-anchor="end">8.157,60</text><text x="1143.4" y="447" font-size="13" fill="#000000" text-anchor="end">3.910,98</text><text x="1223.4" y="447" font-size="13" fill="#000000" text-anchor="end">3.259,15</text><text x="1303.4" y="447" font-size="13" fill="#000000" text-anchor="end">0,00</text><text x="1383.5" y="447" font-size="13" fill="#000000" text-anchor="end">4.246,62</text><text x="27.9" y="467" font-size="11.6" fill="#000000" textLength="48.7" lengthAdjust="spacingAndGlyphs" stroke="#000" stroke-width="0.15">5106020</text><text x="84.0" y="467" font-size="11.6" fill="#000000" textLength="123.5" lengthAdjust="spacingAndGlyphs" stroke="#000" stroke-width="0.15">EGRESOS EN PERSONAL</text><text x="338.6" y="467" font-size="11.6" fill="#000000" textLength="95.4" lengthAdjust="spacingAndGlyphs">Fondo de Reserva</text><text x="753.4" y="467" font-size="13" fill="#000000" text-anchor="end">5.592,96</text><text x="820.4" y="467" font-size="13" fill="#000000" text-anchor="end">0,00</text><text x="892.4" y="467" font-size="13" fill="#000000" text-anchor="end">5.592,96</text><text x="972.4" y="467" font-size="13" fill="#000000" text-anchor="end">5.592,96</text><text x="1063.4" y="467" font-size="13" fill="#000000" text-anchor="end">5.592,96</text><text x="1143.4" y="467" font-size="13" fill="#000000" text-anchor="end">2.136,72</text><text x="1223.4" y="467" font-size="13" fill="#000000" text-anchor="end">1.614,41</text><text x="1303.4" y="467" font-size="13" fill="#000000" text-anchor="end">0,00</text><text x="1383.5" y="467" font-size="13" fill="#000000" text-anchor="end">3.456,24</text><text x="27.9" y="487" font-size="11.6" font-weight="700" fill="#000000" textLength="27.7" lengthAdjust="spacingAndGlyphs">5107</text><text x="84.0" y="487" font-size="11.6" font-weight="700" fill="#000000" textLength="126.2" lengthAdjust="spacingAndGlyphs">EGRESOS EN PERSONAL</text><text x="338.3" y="487" font-size="11.6" font-weight="700" fill="#000000" textLength="89.6" lengthAdjust="spacingAndGlyphs">Indemnizaciones</text><text x="753.4" y="487" font-size="13" font-weight="700" fill="#000000" text-anchor="end">0,00</text><text x="820.4" y="487" font-size="13" font-weight="700" fill="#000000" text-anchor="end">0,00</text><text x="892.4" y="487" font-size="13" font-weight="700" fill="#000000" text-anchor="end">0,00</text><text x="972.4" y="487" font-size="13" font-weight="700" fill="#000000" text-anchor="end">0,00</text><text x="1063.4" y="487" font-size="13" font-weight="700" fill="#000000" text-anchor="end">0,00</text><text x="1143.4" y="487" font-size="13" font-weight="700" fill="#000000" text-anchor="end">0,00</text><text x="1223.4" y="487" font-size="13" font-weight="700" fill="#000000" text-anchor="end">0,00</text><text x="1303.4" y="487" font-size="13" font-weight="700" fill="#000000" text-anchor="end">0,00</text><text x="27.9" y="507" font-size="11.6" fill="#000000" textLength="48.7" lengthAdjust="spacingAndGlyphs" stroke="#000" stroke-width="0.15">5107070</text><text x="84.0" y="507" font-size="11.6" fill="#000000" textLength="123.5" lengthAdjust="spacingAndGlyphs" stroke="#000" stroke-width="0.15">EGRESOS EN PERSONAL</text><text x="338.6" y="507" font-size="11.6" fill="#000000" textLength="327.0" lengthAdjust="spacingAndGlyphs">Compensación por Vacaciones no Gozadas por Cesación de</text><text x="753.4" y="507" font-size="13" fill="#000000" text-anchor="end">0,00</text><text x="820.4" y="507" font-size="13" fill="#000000" text-anchor="end">0,00</text><text x="892.4" y="507" font-size="13" fill="#000000" text-anchor="end">0,00</text><text x="972.4" y="507" font-size="13" fill="#000000" text-anchor="end">0,00</text><text x="1063.4" y="507" font-size="13" fill="#000000" text-anchor="end">0,00</text><text x="1143.4" y="507" font-size="13" fill="#000000" text-anchor="end">0,00</text><text x="1223.4" y="507" font-size="13" fill="#000000" text-anchor="end">0,00</text><text x="1303.4" y="507" font-size="13" fill="#000000" text-anchor="end">0,00</text><text x="27.9" y="527" font-size="11.6" font-weight="700" fill="#000000" textLength="27.7" lengthAdjust="spacingAndGlyphs">5602</text><text x="84.0" y="527" font-size="11.6" font-weight="700" fill="#000000" textLength="119.2" lengthAdjust="spacingAndGlyphs">GASTOS FINANCIEROS</text><text x="338.3" y="527" font-size="11.6" font-weight="700" fill="#000000" textLength="283.6" lengthAdjust="spacingAndGlyphs">Intereses y Otros Cargos de la Deuda Pública Interna</text><text x="753.4" y="527" font-size="13" font-weight="700" fill="#000000" text-anchor="end">4.000,00</text><text x="820.4" y="527" font-size="13" font-weight="700" fill="#000000" text-anchor="end">0,00</text><text x="892.4" y="527" font-size="13" font-weight="700" fill="#000000" text-anchor="end">4.000,00</text><text x="972.4" y="527" font-size="13" font-weight="700" fill="#000000" text-anchor="end">4.000,00</text><text x="1063.4" y="527" font-size="13" font-weight="700" fill="#000000" text-anchor="end">1.912,85</text><text x="1143.4" y="527" font-size="13" font-weight="700" fill="#000000" text-anchor="end">1.912,85</text><text x="1223.4" y="527" font-size="13" font-weight="700" fill="#000000" text-anchor="end">1.912,85</text><text x="1303.4" y="527" font-size="13" font-weight="700" fill="#000000" text-anchor="end">2.087,15</text><text x="1383.5" y="527" font-size="13" font-weight="700" fill="#000000" text-anchor="end">2.087,15</text><text x="27.9" y="547" font-size="11.6" fill="#000000" textLength="48.7" lengthAdjust="spacingAndGlyphs" stroke="#000" stroke-width="0.15">5602010</text><text x="84.0" y="547" font-size="11.6" fill="#000000" textLength="116.5" lengthAdjust="spacingAndGlyphs" stroke="#000" stroke-width="0.15">GASTOS FINANCIEROS</text><text x="338.6" y="547" font-size="11.6" fill="#000000" textLength="141.0" lengthAdjust="spacingAndGlyphs">Sector Público Financiero</text><text x="753.4" y="547" font-size="13" fill="#000000" text-anchor="end">4.000,00</text><text x="820.4" y="547" font-size="13" fill="#000000" text-anchor="end">0,00</text><text x="892.4" y="547" font-size="13" fill="#000000" text-anchor="end">4.000,00</text><text x="972.4" y="547" font-size="13" fill="#000000" text-anchor="end">1.912,85</text><text x="1063.4" y="547" font-size="13" fill="#000000" text-anchor="end">1.912,85</text><text x="1143.4" y="547" font-size="13" fill="#000000" text-anchor="end">1.912,85</text><text x="1223.4" y="547" font-size="13" fill="#000000" text-anchor="end">1.912,85</text><text x="1303.4" y="547" font-size="13" fill="#000000" text-anchor="end">2.087,15</text><text x="1383.5" y="547" font-size="13" fill="#000000" text-anchor="end">2.087,15</text><text x="27.9" y="567" font-size="11.6" font-weight="700" fill="#000000" textLength="27.7" lengthAdjust="spacingAndGlyphs">5801</text><text x="84.0" y="567" font-size="11.6" font-weight="700" fill="#000000" textLength="250.2" lengthAdjust="spacingAndGlyphs">TRANSFERENCIAS Y DONACIONES CORRIENTES</text><text x="338.3" y="567" font-size="11.6" font-weight="700" fill="#000000" textLength="230.6" lengthAdjust="spacingAndGlyphs">Transferencias Corrientes al Sector Público</text><text x="753.4" y="567" font-size="13" font-weight="700" fill="#000000" text-anchor="end">12.388,06</text><text x="820.4" y="567" font-size="13" font-weight="700" fill="#000000" text-anchor="end">0,00</text><text x="892.4" y="567" font-size="13" font-weight="700" fill="#000000" text-anchor="end">12.388,06</text><text x="972.4" y="567" font-size="13" font-weight="700" fill="#000000" text-anchor="end">12.388,06</text><text x="1063.4" y="567" font-size="13" font-weight="700" fill="#000000" text-anchor="end">4.639,70</text><text x="1143.4" y="567" font-size="13" font-weight="700" fill="#000000" text-anchor="end">4.639,70</text><text x="1223.4" y="567" font-size="13" font-weight="700" fill="#000000" text-anchor="end">4.639,70</text><text x="1303.4" y="567" font-size="13" font-weight="700" fill="#000000" text-anchor="end">7.748,36</text><text x="1383.5" y="567" font-size="13" font-weight="700" fill="#000000" text-anchor="end">7.748,36</text><text x="27.9" y="587" font-size="11.6" fill="#000000" textLength="48.7" lengthAdjust="spacingAndGlyphs" stroke="#000" stroke-width="0.15">5801010</text><text x="84.0" y="587" font-size="11.6" fill="#000000" textLength="243.5" lengthAdjust="spacingAndGlyphs" stroke="#000" stroke-width="0.15">TRANSFERENCIAS Y DONACIONES CORRIENTES</text><text x="338.6" y="587" font-size="11.6" fill="#000000" textLength="260.7" lengthAdjust="spacingAndGlyphs">A Entidades del Presupuesto General del Estado</text><text x="753.4" y="587" font-size="13" fill="#000000" text-anchor="end">2.388,06</text><text x="820.4" y="587" font-size="13" fill="#000000" text-anchor="end">0,00</text><text x="892.4" y="587" font-size="13" fill="#000000" text-anchor="end">2.388,06</text><text x="972.4" y="587" font-size="13" fill="#000000" text-anchor="end">491,28</text><text x="1063.4" y="587" font-size="13" fill="#000000" text-anchor="end">491,28</text><text x="1143.4" y="587" font-size="13" fill="#000000" text-anchor="end">491,28</text><text x="1223.4" y="587" font-size="13" fill="#000000" text-anchor="end">491,28</text><text x="1303.4" y="587" font-size="13" fill="#000000" text-anchor="end">1.896,78</text><text x="1383.5" y="587" font-size="13" fill="#000000" text-anchor="end">1.896,78</text><text x="27.9" y="607" font-size="11.6" fill="#000000" textLength="48.7" lengthAdjust="spacingAndGlyphs" stroke="#000" stroke-width="0.15">5801040</text><text x="84.0" y="607" font-size="11.6" fill="#000000" textLength="243.5" lengthAdjust="spacingAndGlyphs" stroke="#000" stroke-width="0.15">TRANSFERENCIAS Y DONACIONES CORRIENTES</text><text x="338.6" y="607" font-size="11.6" fill="#000000" textLength="229.6" lengthAdjust="spacingAndGlyphs">A Gobiernos Autónomos Descentralizados</text><text x="753.4" y="607" font-size="13" fill="#000000" text-anchor="end">10.000,00</text><text x="820.4" y="607" font-size="13" fill="#000000" text-anchor="end">0,00</text><text x="892.4" y="607" font-size="13" fill="#000000" text-anchor="end">10.000,00</text><text x="972.4" y="607" font-size="13" fill="#000000" text-anchor="end">4.148,42</text><text x="1063.4" y="607" font-size="13" fill="#000000" text-anchor="end">4.148,42</text><text x="1143.4" y="607" font-size="13" fill="#000000" text-anchor="end">4.148,42</text><text x="1223.4" y="607" font-size="13" fill="#000000" text-anchor="end">4.148,42</text><text x="1303.4" y="607" font-size="13" fill="#000000" text-anchor="end">5.851,58</text><text x="1383.5" y="607" font-size="13" fill="#000000" text-anchor="end">5.851,58</text><text x="27.9" y="627" font-size="11.6" font-weight="700" fill="#000000" textLength="27.7" lengthAdjust="spacingAndGlyphs">5804</text><text x="84.0" y="627" font-size="11.6" font-weight="700" fill="#000000" textLength="250.2" lengthAdjust="spacingAndGlyphs">TRANSFERENCIAS Y DONACIONES CORRIENTES</text><text x="338.3" y="627" font-size="11.6" font-weight="700" fill="#000000" textLength="228.6" lengthAdjust="spacingAndGlyphs">Aportes y Participaciones al Sector Público</text><text x="753.4" y="627" font-size="13" font-weight="700" fill="#000000" text-anchor="end">335,70</text><text x="820.4" y="627" font-size="13" font-weight="700" fill="#000000" text-anchor="end">0,00</text><text x="892.4" y="627" font-size="13" font-weight="700" fill="#000000" text-anchor="end">335,70</text><text x="972.4" y="627" font-size="13" font-weight="700" fill="#000000" text-anchor="end">0,00</text><text x="1063.4" y="627" font-size="13" font-weight="700" fill="#000000" text-anchor="end">0,00</text><text x="1143.4" y="627" font-size="13" font-weight="700" fill="#000000" text-anchor="end">0,00</text><text x="1223.4" y="627" font-size="13" font-weight="700" fill="#000000" text-anchor="end">0,00</text><text x="1303.4" y="627" font-size="13" font-weight="700" fill="#000000" text-anchor="end">335,70</text><text x="27.9" y="647" font-size="11.6" fill="#000000" textLength="41.7" lengthAdjust="spacingAndGlyphs" stroke="#000" stroke-width="0.15">580406</text><text x="84.0" y="647" font-size="11.6" fill="#000000" textLength="243.5" lengthAdjust="spacingAndGlyphs" stroke="#000" stroke-width="0.15">TRANSFERENCIAS Y DONACIONES CORRIENTES</text><text x="338.6" y="647" font-size="11.6" fill="#000000" textLength="303.0" lengthAdjust="spacingAndGlyphs">Para el IECE por el 0.5% de las Planillas de Pago al IESS</text><text x="753.4" y="647" font-size="13" fill="#000000" text-anchor="end">335,70</text><text x="820.4" y="647" font-size="13" fill="#000000" text-anchor="end">0,00</text><text x="892.4" y="647" font-size="13" fill="#000000" text-anchor="end">335,70</text><text x="972.4" y="647" font-size="13" fill="#000000" text-anchor="end">0,00</text><text x="1063.4" y="647" font-size="13" fill="#000000" text-anchor="end">0,00</text><text x="1143.4" y="647" font-size="13" fill="#000000" text-anchor="end">0,00</text><text x="1223.4" y="647" font-size="13" fill="#000000" text-anchor="end">0,00</text><text x="1303.4" y="647" font-size="13" font-weight="700" fill="#000000" text-anchor="end">335,70</text><text x="27.9" y="667" font-size="11.6" font-weight="700" fill="#000000" textLength="27.7" lengthAdjust="spacingAndGlyphs">7101</text><text x="84.0" y="667" font-size="11.6" font-weight="700" fill="#000000" textLength="222.2" lengthAdjust="spacingAndGlyphs">EGRESOS EN PERSONAL PARA INVERSION</text><text x="338.3" y="667" font-size="11.6" font-weight="700" fill="#000000" textLength="130.6" lengthAdjust="spacingAndGlyphs">Remuneraciones Basicas</text><text x="753.4" y="667" font-size="13" font-weight="700" fill="#000000" text-anchor="end">47.904,00</text><text x="820.4" y="667" font-size="13" font-weight="700" fill="#000000" text-anchor="end">8.063,00</text><text x="892.4" y="667" font-size="13" font-weight="700" fill="#000000" text-anchor="end">55.967,00</text><text x="972.4" y="667" font-size="13" font-weight="700" fill="#000000" text-anchor="end">55.967,00</text><text x="1063.4" y="667" font-size="13" font-weight="700" fill="#000000" text-anchor="end">55.967,00</text><text x="1143.4" y="667" font-size="13" font-weight="700" fill="#000000" text-anchor="end">27.617,00</text><text x="1223.4" y="667" font-size="13" font-weight="700" fill="#000000" text-anchor="end">26.012,42</text><text x="1303.4" y="667" font-size="13" font-weight="700" fill="#000000" text-anchor="end">0,00</text><text x="1383.5" y="667" font-size="13" font-weight="700" fill="#000000" text-anchor="end">28.954,42</text></g><path d="M895 474 h6 l-6 6 z" fill="#1E8A3E"/><path d="M1226 474 h6 l-6 6 z" fill="#1E8A3E"/><path d="M1306 474 h6 l-6 6 z" fill="#1E8A3E"/><path d="M1066 514 h6 l-6 6 z" fill="#1E8A3E"/><path d="M1226 614 h6 l-6 6 z" fill="#1E8A3E"/><path d="M1306 614 h6 l-6 6 z" fill="#1E8A3E"/><rect x="335" y="492" width="332" height="2" fill="#217346" /><rect x="335" y="492" width="2" height="22" fill="#217346" /><rect x="665" y="492" width="2" height="19" fill="#217346" /><rect x="335" y="512" width="327" height="2" fill="#217346" /><rect x="663" y="510" width="6" height="6" fill="#ffffff" /><rect x="664" y="511" width="5" height="5" fill="#217346" /><rect x="1345" y="243" width="21" height="428" fill="#ffffff" /><rect x="1348" y="260" width="15" height="410" fill="#F0F0F0" /><rect x="1348.5" y="245.5" width="14" height="14" fill="#fff" stroke="#ABABAB" stroke-width="1"/><path d="M1351.5 255 h8 l-4 -4 z" fill="#222"/><rect x="1348.5" y="260.5" width="14" height="73" fill="#fff" stroke="#ABABAB" stroke-width="1"/><rect x="1348.5" y="655.5" width="14" height="14" fill="#fff" stroke="#ABABAB" stroke-width="1"/><path d="M1351.5 660 h8 l-4 4 z" fill="#222"/><rect x="0" y="670" width="1366" height="28" fill="#F3F3F3" /><rect x="0" y="670" width="100" height="1" fill="#C6C6C6" /><rect x="252" y="670" width="1114" height="1" fill="#C6C6C6" /><rect x="0" y="698" width="1366" height="1" fill="#ffffff" /><path d="M31.5 679.5 v8 l-4.5 -4 z" fill="#217346"/><path d="M56 679.5 v8 l4.5 -4 z" fill="#217346"/><rect x="81" y="685" width="2" height="2" fill="#217346" /><rect x="85.5" y="685" width="2" height="2" fill="#217346" /><rect x="90" y="685" width="2" height="2" fill="#217346" /><path d="M100.5 698 V670.5 H251.5 V698" fill="#ffffff" stroke="#C6C6C6" stroke-width="1"/><rect x="100" y="692" width="152" height="2" fill="#217346" /><text x="111.7" y="688" font-size="13.6" font-weight="700" fill="#217346" textLength="127.2" lengthAdjust="spacingAndGlyphs">6 Presupuesto JULIO</text><text x="264.7" y="688" font-size="13.6" fill="#444444" textLength="164.6" lengthAdjust="spacingAndGlyphs">8 ComprasProcesos Contrat</text><rect x="444" y="676" width="1" height="18" fill="#C6C6C6" /><text x="458.2" y="688" font-size="13.6" fill="#444444" textLength="79.9" lengthAdjust="spacingAndGlyphs">11. CREDITOS</text><rect x="552" y="676" width="1" height="18" fill="#C6C6C6" /><text x="565.4" y="688" font-size="13.6" fill="#444444" textLength="168.6" lengthAdjust="spacingAndGlyphs">24.2 SESIONES DE CONCEJO</text><rect x="748" y="676" width="1" height="18" fill="#C6C6C6" /><rect x="758.5" y="685" width="2" height="2" fill="#217346" /><rect x="763" y="685" width="2" height="2" fill="#217346" /><rect x="767.5" y="685" width="2" height="2" fill="#217346" /><circle cx="790.5" cy="684" r="7.5" fill="none" stroke="#6E6E6E" stroke-width="1.1"/><path d="M786.5 684 h8 M790.5 680 v8" stroke="#6E6E6E" stroke-width="1.2"/><rect x="806" y="671" width="28" height="27" fill="#ffffff" /><rect x="819.5" y="679" width="1.5" height="1.5" fill="#9A9A9A" /><rect x="819.5" y="683" width="1.5" height="1.5" fill="#9A9A9A" /><rect x="819.5" y="687" width="1.5" height="1.5" fill="#9A9A9A" /><rect x="836.5" y="677.5" width="14" height="14" fill="#fff" stroke="#ABABAB" stroke-width="1"/><path d="M845.5 680.5 v8 l-4 -4 z" fill="#222"/><rect x="850.5" y="677.5" width="318" height="14" fill="#fff" stroke="#ABABAB" stroke-width="1"/><rect x="1328.5" y="677.5" width="14" height="14" fill="#fff" stroke="#ABABAB" stroke-width="1"/><path d="M1334 680.5 v8 l4 -4 z" fill="#222"/><rect x="0" y="699" width="1366" height="21" fill="#217346" /><rect x="0" y="720" width="1366" height="1" fill="#46444B" /><rect x="0" y="721" width="1366" height="2" fill="#1F2226" /><text x="11.4" y="714" font-size="12.4" fill="#ffffff" textLength="23.5" lengthAdjust="spacingAndGlyphs">Listo</text><path d="M60 703.5 a6 6 0 1 0 5 10" fill="none" stroke="#fff" stroke-width="1.1" stroke-dasharray="2 1.2"/><path d="M60.5 701.5 v6 l2 1.5 M63 706 l3 -2 l1.5 2.5" fill="none" stroke="#fff" stroke-width="1.1"/><path d="M62 710 l7 7 M69 709 l-7 8" stroke="#fff" stroke-width="1.8"/><text x="72.8" y="713" font-size="12.2" font-weight="700" fill="#ffffff" textLength="191.8" lengthAdjust="spacingAndGlyphs">Accesibilidad: es necesario investigar</text><rect x="1066" y="699" width="40" height="21" fill="#054D22" /><path d="M1079.5 702.5 h12 v12 h-12 z M1083.5 702.5 v12 M1087.5 702.5 v12 M1079.5 706.5 h12 M1079.5 710.5 h12" fill="none" stroke="#fff" stroke-width="1"/><rect x="1119.5" y="702.5" width="13" height="12" fill="none" stroke="#fff" stroke-width="1"/><rect x="1122.5" y="704.5" width="7" height="8" fill="none" stroke="#fff" stroke-width="1"/><path d="M1124 706.5 h4 M1124 708.5 h4 M1124 710.5 h4" stroke="#fff" stroke-width="1"/><path d="M1159.5 702.5 h13 v12 h-13 z" fill="none" stroke="#fff" stroke-width="1"/><rect x="1160" y="703" width="3" height="7" fill="#F2F2F2" /><rect x="1164" y="703" width="4" height="7" fill="#F2F2F2" /><rect x="1192" y="708" width="8" height="1" fill="#fff" /><rect x="1205" y="708" width="100" height="1" fill="#fff" /><rect x="1253" y="704" width="5" height="11" fill="#fff" /><rect x="1310" y="708" width="9" height="1" fill="#fff" /><rect x="1314" y="704" width="1" height="9" fill="#fff" /><text x="1330.9" y="713" font-size="12.4" fill="#ffffff" textLength="27.7" lengthAdjust="spacingAndGlyphs">100%</text></svg></body></html>
